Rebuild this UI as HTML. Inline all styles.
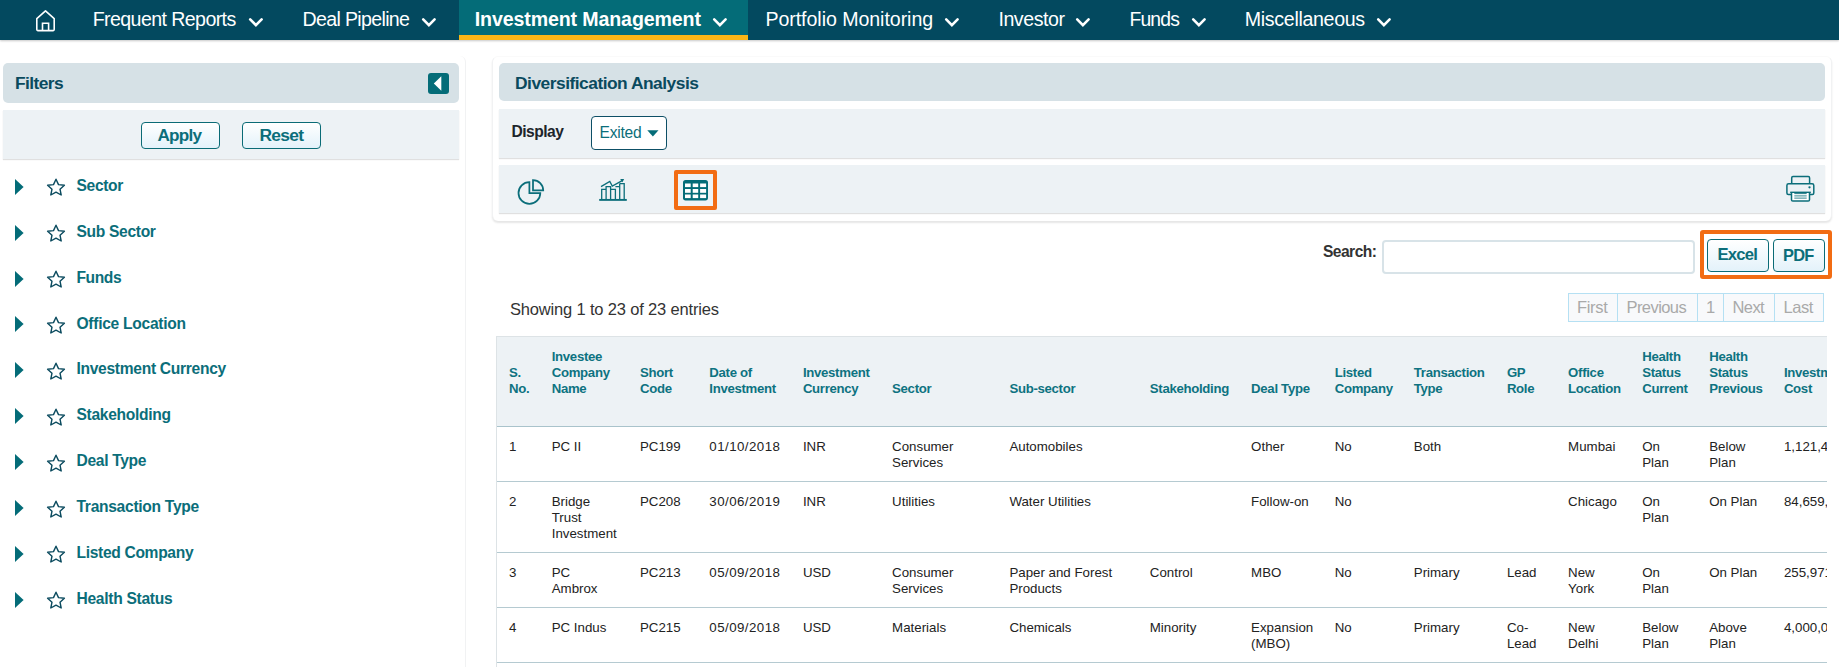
<!DOCTYPE html>
<html><head><meta charset="utf-8"><title>Diversification Analysis</title>
<style>
html,body{margin:0;padding:0;}
body{width:1839px;height:667px;overflow:hidden;position:relative;background:#fff;font-family:"Liberation Sans",sans-serif;}
.t{position:absolute;white-space:nowrap;}
.r{position:absolute;box-sizing:border-box;}
svg.r{overflow:visible;}
.btn{position:absolute;box-sizing:border-box;border:1.5px solid #0a6b76;border-radius:4px;background:linear-gradient(#ffffff,#e3f2fa);}
</style></head><body>
<div class="r" style="left:0px;top:0px;width:1839px;height:40px;background:#03495f;box-shadow:0 1px 2px rgba(0,0,0,.22);"></div>
<div class="r" style="left:459px;top:0px;width:289px;height:35px;background:#046c78;"></div>
<div class="r" style="left:459px;top:35px;width:289px;height:5px;background:#fbb616;"></div>
<svg class="r" style="left:35px;top:9px" width="22" height="24" viewBox="0 0 22 24"><path d="M1.8 9.6 L10.5 1.8 L19.2 9.6 V20.6 Q19.2 21.6 18.2 21.6 H2.8 Q1.8 21.6 1.8 20.6 Z" fill="none" stroke="#fff" stroke-width="1.6" stroke-linejoin="round"/><path d="M7.5 21.6 V14.2 H13.6 V21.6" fill="none" stroke="#fff" stroke-width="1.6"/></svg>
<div class="t " style="left:92.7px;top:9.51px;font-size:19.6px;line-height:19.6px;color:#fff;letter-spacing:-0.593px;">Frequent Reports</div>
<svg class="r" style="left:248.0px;top:16px" width="16" height="12" viewBox="0 0 16 12"><path d="M2.2 3.4 L7.9 9.1 L13.6 3.4" fill="none" stroke="#fff" stroke-width="2.6" stroke-linecap="round"/></svg>
<div class="t " style="left:302.5px;top:9.51px;font-size:19.6px;line-height:19.6px;color:#fff;letter-spacing:-0.667px;">Deal Pipeline</div>
<svg class="r" style="left:421.0px;top:16px" width="16" height="12" viewBox="0 0 16 12"><path d="M2.2 3.4 L7.9 9.1 L13.6 3.4" fill="none" stroke="#fff" stroke-width="2.6" stroke-linecap="round"/></svg>
<div class="t " style="left:474.8px;top:9.51px;font-size:19.6px;line-height:19.6px;color:#fff;font-weight:bold;letter-spacing:-0.125px;">Investment Management</div>
<svg class="r" style="left:712.0px;top:16px" width="16" height="12" viewBox="0 0 16 12"><path d="M2.2 3.4 L7.9 9.1 L13.6 3.4" fill="none" stroke="#fff" stroke-width="2.6" stroke-linecap="round"/></svg>
<div class="t " style="left:765.4px;top:9.51px;font-size:19.6px;line-height:19.6px;color:#fff;letter-spacing:-0.055px;">Portfolio Monitoring</div>
<svg class="r" style="left:943.5px;top:16px" width="16" height="12" viewBox="0 0 16 12"><path d="M2.2 3.4 L7.9 9.1 L13.6 3.4" fill="none" stroke="#fff" stroke-width="2.6" stroke-linecap="round"/></svg>
<div class="t " style="left:998.4px;top:9.51px;font-size:19.6px;line-height:19.6px;color:#fff;letter-spacing:-0.443px;">Investor</div>
<svg class="r" style="left:1074.5px;top:16px" width="16" height="12" viewBox="0 0 16 12"><path d="M2.2 3.4 L7.9 9.1 L13.6 3.4" fill="none" stroke="#fff" stroke-width="2.6" stroke-linecap="round"/></svg>
<div class="t " style="left:1129.5px;top:9.72px;font-size:19.35px;line-height:19.35px;color:#fff;letter-spacing:-0.850px;">Funds</div>
<svg class="r" style="left:1191.0px;top:16px" width="16" height="12" viewBox="0 0 16 12"><path d="M2.2 3.4 L7.9 9.1 L13.6 3.4" fill="none" stroke="#fff" stroke-width="2.6" stroke-linecap="round"/></svg>
<div class="t " style="left:1244.8px;top:9.51px;font-size:19.6px;line-height:19.6px;color:#fff;letter-spacing:-0.317px;">Miscellaneous</div>
<svg class="r" style="left:1376.0px;top:16px" width="16" height="12" viewBox="0 0 16 12"><path d="M2.2 3.4 L7.9 9.1 L13.6 3.4" fill="none" stroke="#fff" stroke-width="2.6" stroke-linecap="round"/></svg>
<div class="r" style="left:-10px;top:56px;width:476px;height:700px;border-right:1px solid #f1f2f3;border-top-right-radius:6px;background:#fff;"></div>
<div class="r" style="left:3px;top:63px;width:456px;height:40px;background:#d6e1e6;border-radius:5px;"></div>
<div class="t " style="left:15.0px;top:74.77px;font-size:17.4px;line-height:17.4px;color:#0a4a5e;font-weight:bold;letter-spacing:-0.583px;">Filters</div>
<div class="r" style="left:428px;top:73px;width:21px;height:21px;background:#046c78;border-radius:3px;"></div>
<svg class="r" style="left:433px;top:76px" width="9" height="15" viewBox="0 0 9 15"><path d="M8.3 0.2 V14.8 L0.8 7.5 Z" fill="#fff"/></svg>
<div class="r" style="left:3px;top:110px;width:456px;height:49px;background:#edf2f5;box-shadow:0 1px 1px rgba(0,0,0,.12);"></div>
<div class="btn" style="left:141px;top:122px;width:79px;height:27px;"></div>
<div class="t " style="left:157.5px;top:126.98px;font-size:17.15px;line-height:17.15px;color:#0b6e7a;font-weight:bold;letter-spacing:-0.762px;">Apply</div>
<div class="btn" style="left:242px;top:122px;width:79px;height:27px;"></div>
<div class="t " style="left:259.5px;top:126.77px;font-size:17.4px;line-height:17.4px;color:#0b6e7a;font-weight:bold;letter-spacing:-0.700px;">Reset</div>
<svg class="r" style="left:15px;top:178.7px" width="9" height="16" viewBox="0 0 9 16"><path d="M0 0 L8.6 8 L0 16 Z" fill="#046c78"/></svg>
<svg class="r" style="left:46px;top:178.2px" width="20" height="19" viewBox="0 0 20 19"><path d="M10 1.2 L12.5 6.6 L18.4 7.2 L14 11.2 L15.2 17 L10 14.1 L4.8 17 L6 11.2 L1.6 7.2 L7.5 6.6 Z" fill="none" stroke="#0a4a5e" stroke-width="1.4" stroke-linejoin="round"/></svg>
<div class="t " style="left:76.5px;top:177.99px;font-size:15.6px;line-height:15.6px;color:#0b6e7a;font-weight:bold;letter-spacing:-0.338px;">Sector</div>
<svg class="r" style="left:15px;top:224.6px" width="9" height="16" viewBox="0 0 9 16"><path d="M0 0 L8.6 8 L0 16 Z" fill="#046c78"/></svg>
<svg class="r" style="left:46px;top:224.1px" width="20" height="19" viewBox="0 0 20 19"><path d="M10 1.2 L12.5 6.6 L18.4 7.2 L14 11.2 L15.2 17 L10 14.1 L4.8 17 L6 11.2 L1.6 7.2 L7.5 6.6 Z" fill="none" stroke="#0a4a5e" stroke-width="1.4" stroke-linejoin="round"/></svg>
<div class="t " style="left:76.5px;top:223.86px;font-size:15.6px;line-height:15.6px;color:#0b6e7a;font-weight:bold;letter-spacing:-0.320px;">Sub Sector</div>
<svg class="r" style="left:15px;top:270.5px" width="9" height="16" viewBox="0 0 9 16"><path d="M0 0 L8.6 8 L0 16 Z" fill="#046c78"/></svg>
<svg class="r" style="left:46px;top:270.0px" width="20" height="19" viewBox="0 0 20 19"><path d="M10 1.2 L12.5 6.6 L18.4 7.2 L14 11.2 L15.2 17 L10 14.1 L4.8 17 L6 11.2 L1.6 7.2 L7.5 6.6 Z" fill="none" stroke="#0a4a5e" stroke-width="1.4" stroke-linejoin="round"/></svg>
<div class="t " style="left:76.5px;top:269.73px;font-size:15.6px;line-height:15.6px;color:#0b6e7a;font-weight:bold;letter-spacing:-0.408px;">Funds</div>
<svg class="r" style="left:15px;top:316.4px" width="9" height="16" viewBox="0 0 9 16"><path d="M0 0 L8.6 8 L0 16 Z" fill="#046c78"/></svg>
<svg class="r" style="left:46px;top:315.9px" width="20" height="19" viewBox="0 0 20 19"><path d="M10 1.2 L12.5 6.6 L18.4 7.2 L14 11.2 L15.2 17 L10 14.1 L4.8 17 L6 11.2 L1.6 7.2 L7.5 6.6 Z" fill="none" stroke="#0a4a5e" stroke-width="1.4" stroke-linejoin="round"/></svg>
<div class="t " style="left:76.5px;top:315.60px;font-size:15.6px;line-height:15.6px;color:#0b6e7a;font-weight:bold;letter-spacing:-0.284px;">Office Location</div>
<svg class="r" style="left:15px;top:362.3px" width="9" height="16" viewBox="0 0 9 16"><path d="M0 0 L8.6 8 L0 16 Z" fill="#046c78"/></svg>
<svg class="r" style="left:46px;top:361.8px" width="20" height="19" viewBox="0 0 20 19"><path d="M10 1.2 L12.5 6.6 L18.4 7.2 L14 11.2 L15.2 17 L10 14.1 L4.8 17 L6 11.2 L1.6 7.2 L7.5 6.6 Z" fill="none" stroke="#0a4a5e" stroke-width="1.4" stroke-linejoin="round"/></svg>
<div class="t " style="left:76.5px;top:361.47px;font-size:15.6px;line-height:15.6px;color:#0b6e7a;font-weight:bold;letter-spacing:-0.302px;">Investment Currency</div>
<svg class="r" style="left:15px;top:408.2px" width="9" height="16" viewBox="0 0 9 16"><path d="M0 0 L8.6 8 L0 16 Z" fill="#046c78"/></svg>
<svg class="r" style="left:46px;top:407.7px" width="20" height="19" viewBox="0 0 20 19"><path d="M10 1.2 L12.5 6.6 L18.4 7.2 L14 11.2 L15.2 17 L10 14.1 L4.8 17 L6 11.2 L1.6 7.2 L7.5 6.6 Z" fill="none" stroke="#0a4a5e" stroke-width="1.4" stroke-linejoin="round"/></svg>
<div class="t " style="left:76.5px;top:407.34px;font-size:15.6px;line-height:15.6px;color:#0b6e7a;font-weight:bold;letter-spacing:-0.312px;">Stakeholding</div>
<svg class="r" style="left:15px;top:454.1px" width="9" height="16" viewBox="0 0 9 16"><path d="M0 0 L8.6 8 L0 16 Z" fill="#046c78"/></svg>
<svg class="r" style="left:46px;top:453.6px" width="20" height="19" viewBox="0 0 20 19"><path d="M10 1.2 L12.5 6.6 L18.4 7.2 L14 11.2 L15.2 17 L10 14.1 L4.8 17 L6 11.2 L1.6 7.2 L7.5 6.6 Z" fill="none" stroke="#0a4a5e" stroke-width="1.4" stroke-linejoin="round"/></svg>
<div class="t " style="left:76.5px;top:453.21px;font-size:15.6px;line-height:15.6px;color:#0b6e7a;font-weight:bold;letter-spacing:-0.317px;">Deal Type</div>
<svg class="r" style="left:15px;top:500.0px" width="9" height="16" viewBox="0 0 9 16"><path d="M0 0 L8.6 8 L0 16 Z" fill="#046c78"/></svg>
<svg class="r" style="left:46px;top:499.5px" width="20" height="19" viewBox="0 0 20 19"><path d="M10 1.2 L12.5 6.6 L18.4 7.2 L14 11.2 L15.2 17 L10 14.1 L4.8 17 L6 11.2 L1.6 7.2 L7.5 6.6 Z" fill="none" stroke="#0a4a5e" stroke-width="1.4" stroke-linejoin="round"/></svg>
<div class="t " style="left:76.5px;top:499.08px;font-size:15.6px;line-height:15.6px;color:#0b6e7a;font-weight:bold;letter-spacing:-0.296px;">Transaction Type</div>
<svg class="r" style="left:15px;top:545.9px" width="9" height="16" viewBox="0 0 9 16"><path d="M0 0 L8.6 8 L0 16 Z" fill="#046c78"/></svg>
<svg class="r" style="left:46px;top:545.4px" width="20" height="19" viewBox="0 0 20 19"><path d="M10 1.2 L12.5 6.6 L18.4 7.2 L14 11.2 L15.2 17 L10 14.1 L4.8 17 L6 11.2 L1.6 7.2 L7.5 6.6 Z" fill="none" stroke="#0a4a5e" stroke-width="1.4" stroke-linejoin="round"/></svg>
<div class="t " style="left:76.5px;top:544.95px;font-size:15.6px;line-height:15.6px;color:#0b6e7a;font-weight:bold;letter-spacing:-0.326px;">Listed Company</div>
<svg class="r" style="left:15px;top:591.8px" width="9" height="16" viewBox="0 0 9 16"><path d="M0 0 L8.6 8 L0 16 Z" fill="#046c78"/></svg>
<svg class="r" style="left:46px;top:591.3px" width="20" height="19" viewBox="0 0 20 19"><path d="M10 1.2 L12.5 6.6 L18.4 7.2 L14 11.2 L15.2 17 L10 14.1 L4.8 17 L6 11.2 L1.6 7.2 L7.5 6.6 Z" fill="none" stroke="#0a4a5e" stroke-width="1.4" stroke-linejoin="round"/></svg>
<div class="t " style="left:76.5px;top:590.82px;font-size:15.6px;line-height:15.6px;color:#0b6e7a;font-weight:bold;letter-spacing:-0.290px;">Health Status</div>
<div class="r" style="left:492px;top:56px;width:1340px;height:165px;border-left:1px solid #f1f2f3;border-right:1px solid #f1f2f3;border-top:1px solid #fafafa;border-radius:6px;background:#fff;box-shadow:0 2px 2px rgba(0,0,0,.10);"></div>
<div class="r" style="left:499px;top:63px;width:1326px;height:38px;background:#d6e1e6;border-radius:5px;"></div>
<div class="t " style="left:515.0px;top:74.77px;font-size:17.4px;line-height:17.4px;color:#0a4a5e;font-weight:bold;letter-spacing:-0.507px;">Diversification Analysis</div>
<div class="r" style="left:499px;top:109px;width:1326px;height:49px;background:#edf2f5;box-shadow:0 1px 1px rgba(0,0,0,.12);"></div>
<div class="t " style="left:511.5px;top:123.79px;font-size:15.6px;line-height:15.6px;color:#1d252b;font-weight:bold;letter-spacing:-0.517px;">Display</div>
<div class="r" style="left:591px;top:116px;width:76px;height:34px;background:#fff;border:1.5px solid #0d4f66;border-radius:4px;"></div>
<div class="t " style="left:599.5px;top:124.79px;font-size:15.6px;line-height:15.6px;color:#0b6e7a;letter-spacing:-0.250px;">Exited</div>
<svg class="r" style="left:647px;top:130px" width="12" height="7" viewBox="0 0 12 7"><path d="M0.3 0.3 H11.5 L5.9 6.5 Z" fill="#046c78"/></svg>
<div class="r" style="left:499px;top:165px;width:1326px;height:48px;background:#edf2f5;box-shadow:0 1px 1px rgba(0,0,0,.12);"></div>
<svg class="r" style="left:512px;top:174px" width="38" height="34" viewBox="0 0 38 34"><g fill="none" stroke="#0b6e7a" stroke-width="1.75" stroke-linejoin="miter"><path d="M17.4 8.1 A10.9 10.9 0 1 0 28.3 19 H17.4 Z"/><path d="M21 6.1 V16.3 H31.2 A10.2 10.2 0 0 0 21 6.1 Z"/></g></svg>
<svg class="r" style="left:595px;top:174px" width="38" height="34" viewBox="0 0 38 34"><g fill="none" stroke="#0b6e7a" stroke-width="1.3"><path d="M6.7 25 V15.4 H11.1 V25 M11.1 15.4 V12.6 H15.6 V25 M15.6 15.4 H20.4 V25 M20.4 12.6 H24.7 V25 M24.7 9.6 H29.2 V25 M24.7 12.6 V9.6"/><path d="M6 12.6 L14.8 7.4 L17.3 12 L27.2 6.6"/></g><path d="M4.2 25.9 H31.8" stroke="#0b6e7a" stroke-width="1.9"/><path d="M25.2 5.1 L29.1 5 L27.5 8.3 Z" fill="#0b6e7a"/></svg>
<div class="r" style="left:674.3px;top:170px;width:42.7px;height:40px;border:4px solid #f26c13;border-radius:2px;"></div>
<svg class="r" style="left:683px;top:180px" width="25" height="21" viewBox="0 0 25 21"><rect x="0" y="0" width="25" height="20.4" rx="2.6" fill="#046c78"/><g fill="#fff"><rect x="2" y="3.5" width="5.7" height="3.6"/><rect x="9.7" y="3.5" width="5.5" height="3.6"/><rect x="17.1" y="3.5" width="6" height="3.6"/><rect x="2" y="9" width="5.7" height="3.8"/><rect x="9.7" y="9" width="5.5" height="3.8"/><rect x="17.1" y="9" width="6" height="3.8"/><rect x="2" y="14.5" width="5.7" height="3.6"/><rect x="9.7" y="14.5" width="5.5" height="3.6"/><rect x="17.1" y="14.5" width="6" height="3.6"/></g></svg>
<svg class="r" style="left:1780px;top:170px" width="40" height="36" viewBox="0 0 40 36"><g fill="none" stroke="#0b6e7a" stroke-width="1.5" stroke-linejoin="round"><path d="M11.7 13.2 V7.9 Q11.7 6.6 13 6.6 H28.3 Q29.6 6.6 29.6 7.9 V13.2"/><path d="M11.3 24.6 H8.4 Q6.9 24.6 6.9 23.1 V15.5 Q6.9 13.8 8.6 13.8 H32.1 Q33.8 13.8 33.8 15.5 V23.1 Q33.8 24.6 32.3 24.6 H29.7"/><path d="M11.5 22.2 V29.8 Q11.5 31.1 12.8 31.1 H28.2 Q29.5 31.1 29.5 29.8 V22.2" fill="#fff"/></g><path d="M10.2 22.3 H30.8" stroke="#0b6e7a" stroke-width="1.4"/><path d="M14.3 23.6 H26.7" stroke="#0b6e7a" stroke-width="0.9"/><path d="M14.3 25.9 H26.7 M14.3 28.1 H26.7" stroke="#5c9fa7" stroke-width="1.3"/><circle cx="29.5" cy="17.3" r="1.15" fill="#0b6e7a"/></svg>
<div class="t " style="left:1323.0px;top:243.79px;font-size:15.6px;line-height:15.6px;color:#333;font-weight:bold;letter-spacing:-0.542px;">Search:</div>
<div class="r" style="left:1382px;top:240px;width:313px;height:34px;border:2px solid #d8e3e8;border-radius:4px;background:#fff;"></div>
<div class="r" style="left:1700px;top:230px;width:132px;height:49px;border:4px solid #f26c13;border-radius:3px;"></div>
<div class="btn" style="left:1707px;top:239px;width:62px;height:33px;"></div>
<div class="t " style="left:1717.5px;top:247.41px;font-size:16.65px;line-height:16.65px;color:#0b6e7a;font-weight:bold;letter-spacing:-0.775px;">Excel</div>
<div class="btn" style="left:1773px;top:239px;width:52px;height:33px;"></div>
<div class="t " style="left:1783.0px;top:247.12px;font-size:16.4px;line-height:16.4px;color:#0b6e7a;font-weight:bold;letter-spacing:-0.750px;">PDF</div>
<div class="t " style="left:510.0px;top:301.03px;font-size:16.5px;line-height:16.5px;color:#333;letter-spacing:-0.170px;">Showing 1 to 23 of 23 entries</div>
<div class="r" style="left:1568px;top:293px;width:256px;height:29px;border:1px solid #b5e0f3;background:#f8f9fb;"></div>
<div class="r" style="left:1617px;top:293px;width:1px;height:29px;background:#b5e0f3;"></div>
<div class="r" style="left:1697px;top:293px;width:1px;height:29px;background:#b5e0f3;"></div>
<div class="r" style="left:1723px;top:293px;width:1px;height:29px;background:#b5e0f3;"></div>
<div class="r" style="left:1774px;top:293px;width:1px;height:29px;background:#b5e0f3;"></div>
<div class="t " style="left:1577.0px;top:299.03px;font-size:16.5px;line-height:16.5px;color:#a9a9a9;letter-spacing:-0.312px;">First</div>
<div class="t " style="left:1626.5px;top:299.03px;font-size:16.5px;line-height:16.5px;color:#a9a9a9;letter-spacing:-0.571px;">Previous</div>
<div class="t " style="left:1706.0px;top:299.03px;font-size:16.5px;line-height:16.5px;color:#a9a9a9;">1</div>
<div class="t " style="left:1732.5px;top:299.03px;font-size:16.5px;line-height:16.5px;color:#a9a9a9;letter-spacing:-0.583px;">Next</div>
<div class="t " style="left:1783.5px;top:299.03px;font-size:16.5px;line-height:16.5px;color:#a9a9a9;letter-spacing:-0.433px;">Last</div>
<div class="r" style="left:496px;top:336px;width:1331px;height:340px;overflow:hidden;border-left:1px solid #dde3e6;border-top:1px solid #dde3e6;">
<div class="r" style="left:0px;top:0px;width:1400px;height:89px;background:#edf2f5;"></div>
<div class="r" style="left:0px;top:89px;width:1400px;height:1px;background:#a9c3cb;"></div>
<div class="r" style="left:0px;top:144px;width:1400px;height:1px;background:#b5cad1;"></div>
<div class="r" style="left:0px;top:215px;width:1400px;height:1px;background:#b5cad1;"></div>
<div class="r" style="left:0px;top:270px;width:1400px;height:1px;background:#b5cad1;"></div>
<div class="r" style="left:0px;top:325px;width:1400px;height:1px;background:#b5cad1;"></div>
<div class="t " style="left:12.0px;top:28.03px;font-size:13.2px;line-height:16px;color:#0e7381;font-weight:bold;letter-spacing:-0.3px;">S.<br>No.</div>
<div class="t " style="left:54.7px;top:12.03px;font-size:13.2px;line-height:16px;color:#0e7381;font-weight:bold;letter-spacing:-0.3px;">Investee<br>Company<br>Name</div>
<div class="t " style="left:143.0px;top:28.03px;font-size:13.2px;line-height:16px;color:#0e7381;font-weight:bold;letter-spacing:-0.3px;">Short<br>Code</div>
<div class="t " style="left:212.3px;top:28.03px;font-size:13.2px;line-height:16px;color:#0e7381;font-weight:bold;letter-spacing:-0.3px;">Date of<br>Investment</div>
<div class="t " style="left:305.9px;top:28.03px;font-size:13.2px;line-height:16px;color:#0e7381;font-weight:bold;letter-spacing:-0.3px;">Investment<br>Currency</div>
<div class="t " style="left:395.1px;top:44.03px;font-size:13.2px;line-height:16px;color:#0e7381;font-weight:bold;letter-spacing:-0.3px;">Sector</div>
<div class="t " style="left:512.4px;top:44.03px;font-size:13.2px;line-height:16px;color:#0e7381;font-weight:bold;letter-spacing:-0.3px;">Sub-sector</div>
<div class="t " style="left:652.8px;top:44.03px;font-size:13.2px;line-height:16px;color:#0e7381;font-weight:bold;letter-spacing:-0.3px;">Stakeholding</div>
<div class="t " style="left:754.1px;top:44.03px;font-size:13.2px;line-height:16px;color:#0e7381;font-weight:bold;letter-spacing:-0.3px;">Deal Type</div>
<div class="t " style="left:837.7px;top:28.03px;font-size:13.2px;line-height:16px;color:#0e7381;font-weight:bold;letter-spacing:-0.3px;">Listed<br>Company</div>
<div class="t " style="left:916.8px;top:28.03px;font-size:13.2px;line-height:16px;color:#0e7381;font-weight:bold;letter-spacing:-0.3px;">Transaction<br>Type</div>
<div class="t " style="left:1009.9px;top:28.03px;font-size:13.2px;line-height:16px;color:#0e7381;font-weight:bold;letter-spacing:-0.3px;">GP<br>Role</div>
<div class="t " style="left:1071.1px;top:28.03px;font-size:13.2px;line-height:16px;color:#0e7381;font-weight:bold;letter-spacing:-0.3px;">Office<br>Location</div>
<div class="t " style="left:1145.2px;top:12.03px;font-size:13.2px;line-height:16px;color:#0e7381;font-weight:bold;letter-spacing:-0.3px;">Health<br>Status<br>Current</div>
<div class="t " style="left:1212.2px;top:12.03px;font-size:13.2px;line-height:16px;color:#0e7381;font-weight:bold;letter-spacing:-0.3px;">Health<br>Status<br>Previous</div>
<div class="t " style="left:1286.9px;top:28.03px;font-size:13.2px;line-height:16px;color:#0e7381;font-weight:bold;letter-spacing:-0.3px;">Investment<br>Cost</div>
<div class="t " style="left:12.0px;top:102.39px;font-size:13.3px;line-height:16px;color:#222;">1</div>
<div class="t " style="left:54.7px;top:102.39px;font-size:13.3px;line-height:16px;color:#222;">PC II</div>
<div class="t " style="left:143.0px;top:102.39px;font-size:13.3px;line-height:16px;color:#222;">PC199</div>
<div class="t " style="left:212.3px;top:102.39px;font-size:13.3px;line-height:16px;color:#222;letter-spacing:0.45px;">01/10/2018</div>
<div class="t " style="left:305.9px;top:102.39px;font-size:13.3px;line-height:16px;color:#222;">INR</div>
<div class="t " style="left:395.1px;top:102.39px;font-size:13.3px;line-height:16px;color:#222;">Consumer<br>Services</div>
<div class="t " style="left:512.4px;top:102.39px;font-size:13.3px;line-height:16px;color:#222;">Automobiles</div>
<div class="t " style="left:754.1px;top:102.39px;font-size:13.3px;line-height:16px;color:#222;">Other</div>
<div class="t " style="left:837.7px;top:102.39px;font-size:13.3px;line-height:16px;color:#222;">No</div>
<div class="t " style="left:916.8px;top:102.39px;font-size:13.3px;line-height:16px;color:#222;">Both</div>
<div class="t " style="left:1071.1px;top:102.39px;font-size:13.3px;line-height:16px;color:#222;">Mumbai</div>
<div class="t " style="left:1145.2px;top:102.39px;font-size:13.3px;line-height:16px;color:#222;">On<br>Plan</div>
<div class="t " style="left:1212.2px;top:102.39px;font-size:13.3px;line-height:16px;color:#222;">Below<br>Plan</div>
<div class="t " style="left:1286.9px;top:102.39px;font-size:13.3px;line-height:16px;color:#222;">1,121,4</div>
<div class="t " style="left:12.0px;top:157.39px;font-size:13.3px;line-height:16px;color:#222;">2</div>
<div class="t " style="left:54.7px;top:157.39px;font-size:13.3px;line-height:16px;color:#222;">Bridge<br>Trust<br>Investment</div>
<div class="t " style="left:143.0px;top:157.39px;font-size:13.3px;line-height:16px;color:#222;">PC208</div>
<div class="t " style="left:212.3px;top:157.39px;font-size:13.3px;line-height:16px;color:#222;letter-spacing:0.45px;">30/06/2019</div>
<div class="t " style="left:305.9px;top:157.39px;font-size:13.3px;line-height:16px;color:#222;">INR</div>
<div class="t " style="left:395.1px;top:157.39px;font-size:13.3px;line-height:16px;color:#222;">Utilities</div>
<div class="t " style="left:512.4px;top:157.39px;font-size:13.3px;line-height:16px;color:#222;">Water Utilities</div>
<div class="t " style="left:754.1px;top:157.39px;font-size:13.3px;line-height:16px;color:#222;">Follow-on</div>
<div class="t " style="left:837.7px;top:157.39px;font-size:13.3px;line-height:16px;color:#222;">No</div>
<div class="t " style="left:1071.1px;top:157.39px;font-size:13.3px;line-height:16px;color:#222;">Chicago</div>
<div class="t " style="left:1145.2px;top:157.39px;font-size:13.3px;line-height:16px;color:#222;">On<br>Plan</div>
<div class="t " style="left:1212.2px;top:157.39px;font-size:13.3px;line-height:16px;color:#222;">On Plan</div>
<div class="t " style="left:1286.9px;top:157.39px;font-size:13.3px;line-height:16px;color:#222;">84,659,</div>
<div class="t " style="left:12.0px;top:228.39px;font-size:13.3px;line-height:16px;color:#222;">3</div>
<div class="t " style="left:54.7px;top:228.39px;font-size:13.3px;line-height:16px;color:#222;">PC<br>Ambrox</div>
<div class="t " style="left:143.0px;top:228.39px;font-size:13.3px;line-height:16px;color:#222;">PC213</div>
<div class="t " style="left:212.3px;top:228.39px;font-size:13.3px;line-height:16px;color:#222;letter-spacing:0.45px;">05/09/2018</div>
<div class="t " style="left:305.9px;top:228.39px;font-size:13.3px;line-height:16px;color:#222;">USD</div>
<div class="t " style="left:395.1px;top:228.39px;font-size:13.3px;line-height:16px;color:#222;">Consumer<br>Services</div>
<div class="t " style="left:512.4px;top:228.39px;font-size:13.3px;line-height:16px;color:#222;">Paper and Forest<br>Products</div>
<div class="t " style="left:652.8px;top:228.39px;font-size:13.3px;line-height:16px;color:#222;">Control</div>
<div class="t " style="left:754.1px;top:228.39px;font-size:13.3px;line-height:16px;color:#222;">MBO</div>
<div class="t " style="left:837.7px;top:228.39px;font-size:13.3px;line-height:16px;color:#222;">No</div>
<div class="t " style="left:916.8px;top:228.39px;font-size:13.3px;line-height:16px;color:#222;">Primary</div>
<div class="t " style="left:1009.9px;top:228.39px;font-size:13.3px;line-height:16px;color:#222;">Lead</div>
<div class="t " style="left:1071.1px;top:228.39px;font-size:13.3px;line-height:16px;color:#222;">New<br>York</div>
<div class="t " style="left:1145.2px;top:228.39px;font-size:13.3px;line-height:16px;color:#222;">On<br>Plan</div>
<div class="t " style="left:1212.2px;top:228.39px;font-size:13.3px;line-height:16px;color:#222;">On Plan</div>
<div class="t " style="left:1286.9px;top:228.39px;font-size:13.3px;line-height:16px;color:#222;">255,971</div>
<div class="t " style="left:12.0px;top:283.39px;font-size:13.3px;line-height:16px;color:#222;">4</div>
<div class="t " style="left:54.7px;top:283.39px;font-size:13.3px;line-height:16px;color:#222;">PC Indus</div>
<div class="t " style="left:143.0px;top:283.39px;font-size:13.3px;line-height:16px;color:#222;">PC215</div>
<div class="t " style="left:212.3px;top:283.39px;font-size:13.3px;line-height:16px;color:#222;letter-spacing:0.45px;">05/09/2018</div>
<div class="t " style="left:305.9px;top:283.39px;font-size:13.3px;line-height:16px;color:#222;">USD</div>
<div class="t " style="left:395.1px;top:283.39px;font-size:13.3px;line-height:16px;color:#222;">Materials</div>
<div class="t " style="left:512.4px;top:283.39px;font-size:13.3px;line-height:16px;color:#222;">Chemicals</div>
<div class="t " style="left:652.8px;top:283.39px;font-size:13.3px;line-height:16px;color:#222;">Minority</div>
<div class="t " style="left:754.1px;top:283.39px;font-size:13.3px;line-height:16px;color:#222;">Expansion<br>(MBO)</div>
<div class="t " style="left:837.7px;top:283.39px;font-size:13.3px;line-height:16px;color:#222;">No</div>
<div class="t " style="left:916.8px;top:283.39px;font-size:13.3px;line-height:16px;color:#222;">Primary</div>
<div class="t " style="left:1009.9px;top:283.39px;font-size:13.3px;line-height:16px;color:#222;">Co-<br>Lead</div>
<div class="t " style="left:1071.1px;top:283.39px;font-size:13.3px;line-height:16px;color:#222;">New<br>Delhi</div>
<div class="t " style="left:1145.2px;top:283.39px;font-size:13.3px;line-height:16px;color:#222;">Below<br>Plan</div>
<div class="t " style="left:1212.2px;top:283.39px;font-size:13.3px;line-height:16px;color:#222;">Above<br>Plan</div>
<div class="t " style="left:1286.9px;top:283.39px;font-size:13.3px;line-height:16px;color:#222;">4,000,0</div>
</div>
</body></html>
